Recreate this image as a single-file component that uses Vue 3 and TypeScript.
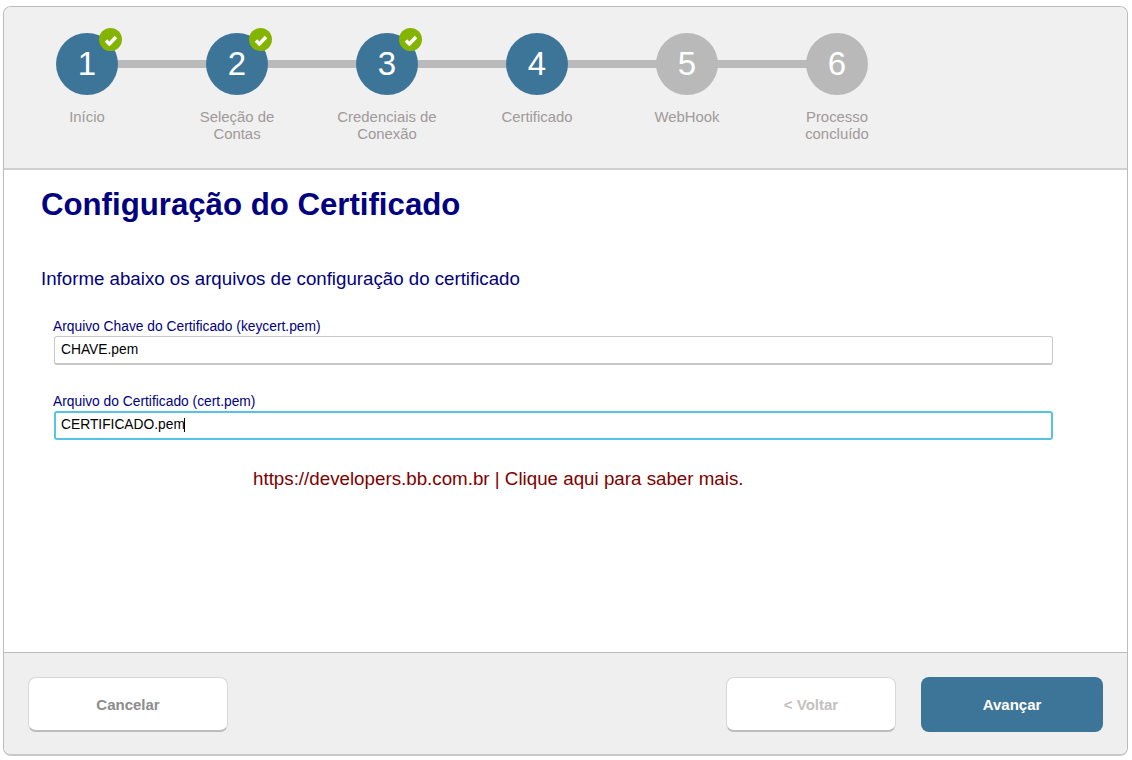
<script setup lang="ts">
import { ref, onMounted } from "vue";

const passos = [
  { num: 1, nome: ["Início"], feito: true, ativo: true },
  { num: 2, nome: ["Seleção de", "Contas"], feito: true, ativo: true },
  { num: 3, nome: ["Credenciais de", "Conexão"], feito: true, ativo: true },
  { num: 4, nome: ["Certificado"], feito: false, ativo: true },
  { num: 5, nome: ["WebHook"], feito: false, ativo: false },
  { num: 6, nome: ["Processo", "concluído"], feito: false, ativo: false },
];

const chave = ref("CHAVE.pem");
const certificado = ref("CERTIFICADO.pem");
const campoCert = ref<HTMLInputElement | null>(null);

onMounted(() => {
  const el = campoCert.value;
  if (el) {
    el.focus();
    el.setSelectionRange(el.value.length, el.value.length);
  }
});
</script>

<template>
  <div class="wizard">
    <header class="topo">
      <ol class="passos">
        <li v-for="p in passos" :key="p.num" class="passo">
          <div class="circulo" :class="{ ativo: p.ativo }">
            {{ p.num }}
            <span v-if="p.feito" class="check">
              <svg width="14" height="12" viewBox="0 0 14 12">
                <path d="M2 6.5 L5.4 10 L12 3" fill="none" stroke="#fff" stroke-width="3.4" />
              </svg>
            </span>
          </div>
          <div class="rotulo">
            <div v-for="linha in p.nome" :key="linha">{{ linha }}</div>
          </div>
        </li>
      </ol>
    </header>

    <main class="conteudo">
      <h1>Configuração do Certificado</h1>
      <p class="info">Informe abaixo os arquivos de configuração do certificado</p>

      <label class="campo">
        <span>Arquivo Chave do Certificado (keycert.pem)</span>
        <div class="caixa">
          <input v-model="chave" type="text" />
        </div>
      </label>
      <label class="campo segundo">
        <span>Arquivo do Certificado (cert.pem)</span>
        <div class="caixa">
          <input ref="campoCert" v-model="certificado" type="text" />
          <i class="cursor"></i>
        </div>
      </label>

      <p class="link">https://developers.bb.com.br | Clique aqui para saber mais.</p>
    </main>

    <footer class="rodape">
      <button class="btn cancelar">Cancelar</button>
      <div class="direita">
        <button class="btn voltar">&lt; Voltar</button>
        <button class="btn avancar">Avançar</button>
      </div>
    </footer>
  </div>
</template>

<style scoped>
.wizard {
  width: 1125px;
  height: 750px;
  margin: 6px 0 0 3px;
  box-sizing: border-box;
  border: 1px solid #bcbcbc;
  border-bottom: 2px solid #c8c8c8;
  border-radius: 8px;
  display: flex;
  flex-direction: column;
  overflow: hidden;
  background: #fff;
  font-family: "Liberation Sans", Arial, sans-serif;
}

.topo {
  height: 163px;
  box-sizing: border-box;
  flex: none;
  background: #f0f0f0;
  border-bottom: 2px solid #d0d0d0;
  padding-top: 26px;
}

.passos {
  list-style: none;
  margin: 0 0 0 8px;
  padding: 0;
  display: flex;
}

.passo {
  width: 150px;
  display: flex;
  flex-direction: column;
  align-items: center;
  position: relative;
}

.passo:not(:last-child)::after {
  content: "";
  position: absolute;
  left: 75px;
  top: 27px;
  width: 150px;
  height: 8px;
  background: #bababa;
}

.circulo {
  width: 62px;
  height: 62px;
  border-radius: 50%;
  background: #b9b9b9;
  color: #fff;
  font-size: 33px;
  line-height: 62px;
  text-align: center;
  position: relative;
  z-index: 1;
}

.circulo.ativo {
  background: #3d7599;
}

.check {
  position: absolute;
  top: -5px;
  right: -4px;
  width: 23px;
  height: 23px;
  border-radius: 50%;
  background: #84b400;
  display: flex;
  align-items: center;
  justify-content: center;
}

.rotulo {
  margin-top: 14px;
  color: #a09a9a;
  font-size: 14.9px;
  line-height: 17px;
  text-align: center;
}

.conteudo {
  flex: 1;
  padding: 0 37px;
  position: relative;
}

h1 {
  margin: 18px 0 0;
  color: #000080;
  font-size: 31.2px;
  line-height: 33px;
  font-weight: bold;
}

.info {
  margin: 47px 0 0;
  color: #000080;
  font-size: 18.7px;
  line-height: 22px;
}

.campo {
  display: block;
  margin: 30px 0 0 12px;
}

.campo.segundo {
  margin-top: 30px;
}

.campo span {
  display: block;
  color: #000080;
  font-size: 13.8px;
  line-height: 14px;
}

.caixa {
  position: relative;
  width: 999px;
  height: 29px;
  margin: 2px 0 0 1px;
}

.caixa input {
  display: block;
  width: 100%;
  height: 100%;
  box-sizing: border-box;
  padding: 0 6px 2px;
  border: 1px solid #c8c8c8;
  border-bottom-width: 2px;
  border-radius: 3px;
  background: #fff;
  color: #000;
  font-family: inherit;
  font-size: 13.8px;
  caret-color: transparent;
  outline: none;
}

.caixa input:focus {
  border: 2px solid #55c4e2;
  padding: 0 5px 2px;
}

/* cursor de texto sobre o campo em foco */
.cursor {
  position: absolute;
  left: 130px;
  top: 7px;
  width: 1px;
  height: 14px;
  background: #000;
}

.link {
  margin: 28px 0 0 212px;
  color: #800000;
  font-size: 18.75px;
  line-height: 22px;
}

.rodape {
  height: 102px;
  flex: none;
  box-sizing: border-box;
  background: #efefef;
  border-top: 1px solid #bcbcbc;
  padding: 24px 24px 0 24px;
  display: flex;
  justify-content: space-between;
  align-items: flex-start;
}

.direita {
  display: flex;
  gap: 25px;
}

.btn {
  height: 55px;
  box-sizing: border-box;
  border: 1px solid #d8d8d8;
  border-bottom: 2px solid #bcbcbc;
  border-radius: 8px;
  background: #fff;
  font-family: inherit;
  font-size: 15px;
  font-weight: bold;
  cursor: pointer;
}

.cancelar {
  width: 200px;
  color: #8c8c8c;
}

.voltar {
  width: 170px;
  color: #c4c0c0;
}

.avancar {
  width: 182px;
  border: none;
  background: #3d7599;
  color: #fff;
}
</style>
